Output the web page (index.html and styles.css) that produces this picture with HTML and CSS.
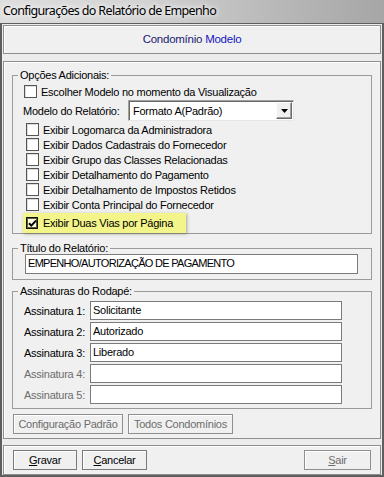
FILE: index.html
```html
<!DOCTYPE html>
<html lang="pt-BR">
<head>
<meta charset="utf-8">
<title>Configurações do Relatório de Empenho</title>
<link rel="stylesheet" href="styles.css">
</head>
<body>
<div class="window">
  <div class="titlebar">Configurações do Relatório de Empenho</div>
  <div class="frame">
    <div class="panel header"><span class="c1">Condomínio</span> <span class="c2">Modelo</span></div>
    <div class="panel main">
      <fieldset class="group opts">
        <legend>Opções Adicionais:</legend>
        <label class="check first"><span class="box"></span>Escolher Modelo no momento da Visualização</label>
        <div class="model-row">
          <span class="model-label">Modelo do Relatório:</span>
          <div class="select"><span class="sel-text">Formato A(Padrão)</span><span class="sel-btn"><svg width="7" height="4" viewBox="0 0 7 4"><path d="M0 0h7L3.5 4z" fill="#000"/></svg></span></div>
        </div>
        <label class="check"><span class="box"></span>Exibir Logomarca da Administradora</label>
        <label class="check"><span class="box"></span>Exibir Dados Cadastrais do Fornecedor</label>
        <label class="check"><span class="box"></span>Exibir Grupo das Classes Relacionadas</label>
        <label class="check"><span class="box"></span>Exibir Detalhamento do Pagamento</label>
        <label class="check"><span class="box"></span>Exibir Detalhamento de Impostos Retidos</label>
        <label class="check"><span class="box"></span>Exibir Conta Principal do Fornecedor</label>
        <label class="check hl"><span class="box checked"><svg width="9" height="9" viewBox="0 0 9 9"><path d="M1 4.2l2.3 2.4L8 1.6" fill="none" stroke="#000" stroke-width="2"/></svg></span>Exibir Duas Vias por Página</label>
      </fieldset>
      <fieldset class="group titulo">
        <legend>Título do Relatório:</legend>
        <div class="input wide">EMPENHO/AUTORIZAÇÃO DE PAGAMENTO</div>
      </fieldset>
      <fieldset class="group sigs">
        <legend>Assinaturas do Rodapé:</legend>
        <div class="sig"><span class="sig-label">Assinatura 1:</span><div class="input">Solicitante</div></div>
        <div class="sig"><span class="sig-label">Assinatura 2:</span><div class="input">Autorizado</div></div>
        <div class="sig"><span class="sig-label">Assinatura 3:</span><div class="input">Liberado</div></div>
        <div class="sig off"><span class="sig-label">Assinatura 4:</span><div class="input"></div></div>
        <div class="sig off"><span class="sig-label">Assinatura 5:</span><div class="input"></div></div>
      </fieldset>
      <div class="btn-row">
        <button class="btn off b-conf">Configuração Padrão</button>
        <button class="btn off b-todos">Todos Condomínios</button>
      </div>
    </div>
    <div class="panel footer">
      <button class="btn b-gravar"><u>G</u>ravar</button>
      <button class="btn b-cancel"><u>C</u>ancelar</button>
      <button class="btn off b-sair"><u>S</u>air</button>
    </div>
  </div>
</div>
</body>
</html>
```
FILE: styles.css
```css
* { box-sizing: border-box; }
body {
  margin: 0;
  width: 384px;
  height: 477px;
  overflow: hidden;
  background: #f0f0f0;
  font-family: "Liberation Sans", Arial, sans-serif;
  font-size: 11px;
  letter-spacing: -0.25px;
  color: #000;
}
.window { width: 384px; height: 477px; display: flex; flex-direction: column; }
.titlebar {
  height: 23px;
  padding: 1px 0 0 3px;
  font-family: "Noto Sans", "Liberation Sans", sans-serif;
  font-size: 12.5px;
  letter-spacing: -0.65px;
  line-height: 19px;
  color: #000;
  background: linear-gradient(to right, #dedede 0%, #d4d4d4 35%, #bdbdbd 65%, #a6a6a6 100%);
  text-shadow: 0 0 5px #fff, 0 0 8px #fff;
}
.frame {
  flex: 1;
  display: flex;
  flex-direction: column;
  border: 2px solid #5e5e5e;
  border-top: 1px solid #5e5e5e;
  padding: 1px 1px 0 1px;
  background: #ececec;
}
.panel {
  border: 1px solid #8e8e8e;
  box-shadow: inset 1px 1px 0 #fff;
  background: #f0f0f0;
}
.header {
  height: 29px;
  line-height: 27px;
  text-align: center;
  font-size: 11.5px;
}
.c1 { color: #1a1a72; }
.c2 { color: #1515c4; }
.main {
  margin-top: 7px;
  height: 378px;
  padding: 0 8px;
  display: flex;
  flex-direction: column;
}
.group {
  margin: 0;
  border: 1px solid #9a9a9a;
  min-inline-size: 0;
}
.group legend {
  line-height: 13px;
  padding: 0 2px;
  height: 13px;
}
.opts { margin-top: 7px; padding: 2px 0 0 11px; }
.opts legend { margin-left: -6px; }
.check {
  display: flex;
  align-items: center;
  height: 15px;
  white-space: nowrap;
}
.box {
  width: 13px;
  height: 13px;
  border: 1px solid #555;
  background: #fff;
  box-shadow: inset 1px 1px 0 #dcdcdc;
  margin-left: 2px;
  margin-right: 4px;
  flex: none;
  display: flex;
  align-items: center;
  justify-content: center;
}
.check.first .box { margin-left: 0; margin-right: 4px; }
.model-row {
  display: flex;
  align-items: center;
  height: 21px;
  margin: 1px 0 1px -1px;
}
.model-label { width: 105px; }
.select {
  width: 166px;
  height: 21px;
  background: #fff;
  border: 1px solid;
  border-color: #a0a0a0 #e6e6e6 #e6e6e6 #a0a0a0;
  box-shadow: inset 1px 1px 0 #696969;
  display: flex;
  align-items: center;
  padding: 1px 1px 1px 4px;
}
.sel-text { flex: 1; }
.sel-btn {
  width: 16px;
  height: 17px;
  background: #f0f0f0;
  border: 1px solid;
  border-color: #fff #696969 #696969 #fff;
  box-shadow: inset -1px -1px 0 #a0a0a0;
  display: flex;
  align-items: center;
  justify-content: center;
}
.hl {
  height: 20px;
  width: 163px;
  margin: 1px 0 0 -1px;
  padding-left: 1px;
  background: #f3f48a;
  box-shadow: 1px 1px 3px rgba(80, 80, 40, 0.45);
}
.box.checked {
  border: 1px solid #111;
  box-shadow: inset 0 0 0 1px #5c5c30;
  background: #fafae0;
  width: 12px;
  height: 12px;
}
.hl .box { margin-left: 2px; margin-right: 5px; }
.titulo { margin-top: 8px; padding: 0 0 5px 12px; }
.titulo legend { margin-left: -7px; }
.input {
  height: 20px;
  background: #fff;
  border: 1px solid #7b7b7b;
  padding: 0 2px;
  line-height: 17px;
  white-space: nowrap;
}
.wide { width: 333px; margin-top: -1px; letter-spacing: -0.7px; }
.sigs { margin-top: 5px; padding: 3px 0 4px 10px; }
.sigs legend { margin-left: -5px; }
.sig {
  display: flex;
  align-items: center;
  height: 19px;
  margin-bottom: 2px;
}
.sig:last-child { margin-bottom: 0; }
.sig-label { width: 67px; padding-left: 1px; }
.sig .input { width: 252px; height: 19px; line-height: 16px; }
.sig.off .sig-label { color: #6d6d6d; }
.btn-row { display: flex; gap: 5px; margin-top: 5px; padding-left: 1px; }
.btn {
  height: 20px;
  font: inherit;
  letter-spacing: inherit;
  color: #000;
  background: #f0f0f0;
  border: 1px solid #7a7a7a;
  box-shadow: inset 1px 1px 0 #fff;
  padding: 0;
  text-align: center;
}
.btn.off { color: #6d6d6d; border-color: #8f8f8f; }
.b-conf { width: 110px; }
.b-todos { width: 105px; }
.footer {
  margin-top: 6px;
  height: 30px;
  display: flex;
  align-items: flex-start;
  padding: 4px 9px 0 9px;
  gap: 5px;
}
.b-gravar { width: 64px; }
.b-cancel { width: 65px; }
.b-sair { width: 67px; margin-left: auto; }
```
